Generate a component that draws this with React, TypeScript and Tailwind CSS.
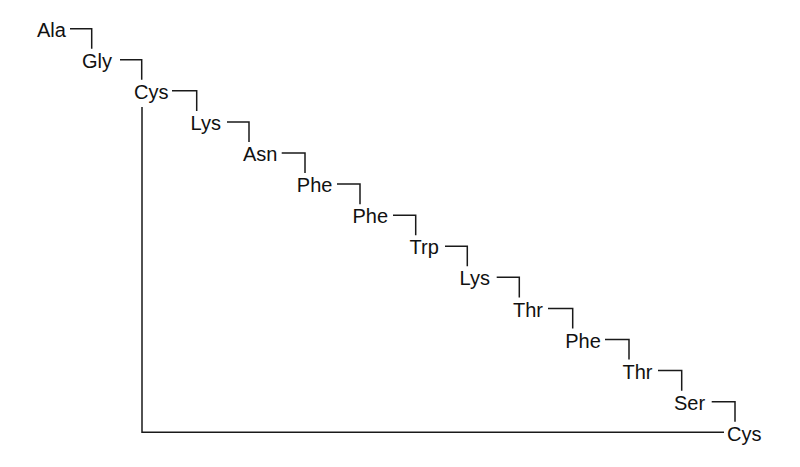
import React from "react";

const labels: { t: string; x: number }[] = [
  { t: "Ala", x: 37 },
  { t: "Gly", x: 82 },
  { t: "Cys", x: 134 },
  { t: "Lys", x: 190.5 },
  { t: "Asn", x: 243 },
  { t: "Phe", x: 296.8 },
  { t: "Phe", x: 352.5 },
  { t: "Trp", x: 409.5 },
  { t: "Lys", x: 459.5 },
  { t: "Thr", x: 513 },
  { t: "Phe", x: 565.2 },
  { t: "Thr", x: 622.5 },
  { t: "Ser", x: 674 },
  { t: "Cys", x: 727 },
];

const hStart = [70, 120, 172, 227, 281.7, 337, 393, 445, 496.7, 548, 605, 658, 711.7];
const vX = [91.7, 141.7, 196.7, 249, 305, 360, 415.7, 467.3, 519.3, 572.7, 629, 681.7, 735];

const base = (i: number) => 36.7 + 31.08 * i;

export default function App() {
  return (
    <div className="relative w-[800px] h-[467px] bg-white overflow-hidden">
      <svg className="absolute left-0 top-0" width="800" height="467" viewBox="0 0 800 467">
        <g stroke="#1a1a1a" strokeWidth="1.5" fill="none">
          {hStart.map((hs, i) => {
            const y = base(i) - 8;
            const y2 = base(i + 1) - 19;
            return (
              <polyline key={i} points={`${hs},${y} ${vX[i]},${y} ${vX[i]},${y2}`} />
            );
          })}
          <polyline points="142,107 142,432.3 724,432.3" />
        </g>
      </svg>
      {labels.map((l, i) => (
        <div
          key={i}
          className="absolute text-[20px] leading-[20px] text-[#111] whitespace-nowrap"
          style={{ left: l.x, top: base(i) - 16.9, fontFamily: '"Liberation Sans", Arial, sans-serif' }}
        >
          {l.t}
        </div>
      ))}
    </div>
  );
}
